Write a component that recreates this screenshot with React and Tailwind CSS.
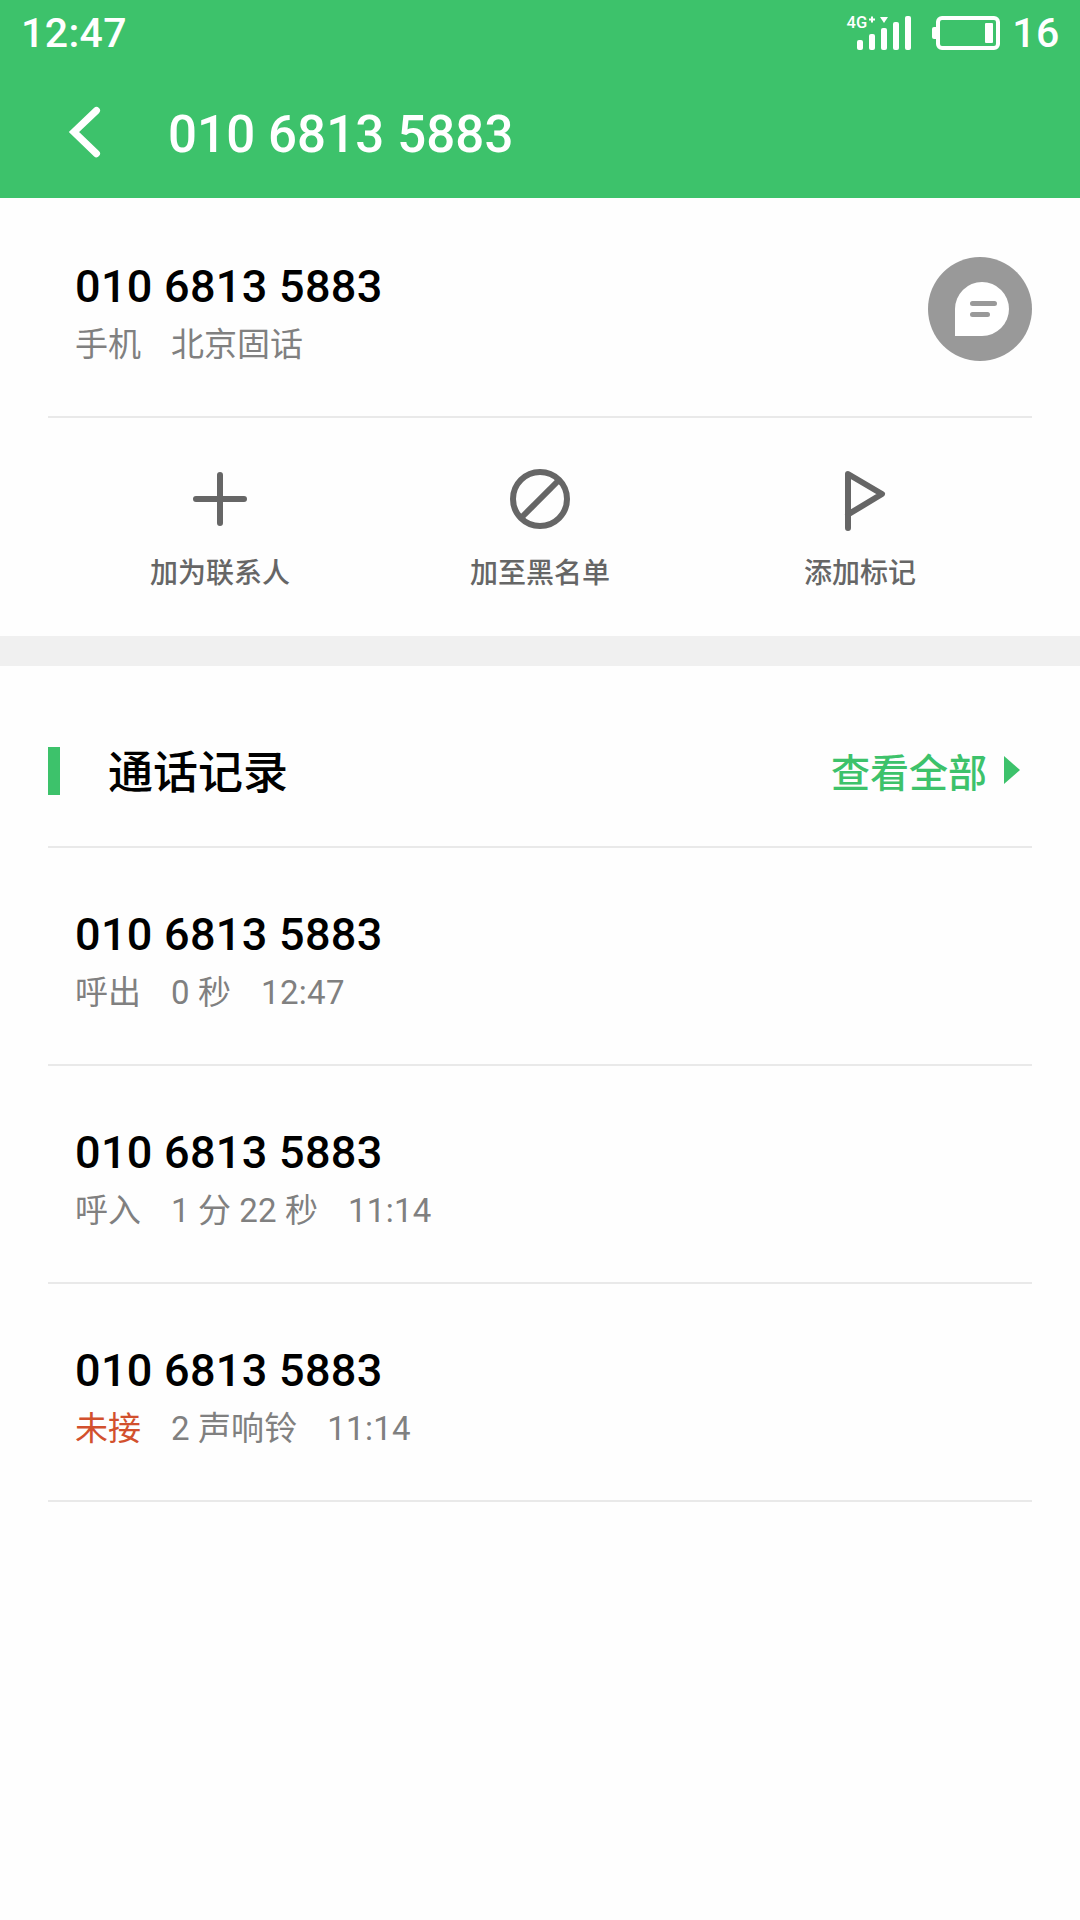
const NUMBER = '010 6813 5883';

const calls = [
  { id: 1, type: '呼出', detail: '0 秒', time: '12:47' },
  { id: 2, type: '呼入', detail: '1 分 22 秒', time: '11:14' },
  { id: 3, type: '未接', detail: '2 声响铃', time: '11:14', missed: true },
];

function SignalIcon() {
  return (
    <svg className="overflow-visible" width="66" height="36" viewBox="0 0 66 36" fill="currentColor">
      <text x="-0.5" y="12.500" fontSize="16.500" fontWeight="500">4G</text>
      <path d="M22 4.5h6M25 1.5v6" stroke="currentColor" strokeWidth="2" />
      <path d="M33 2h8l-4 6z" />
      <rect x="10" y="25" width="6" height="10" rx="2" />
      <rect x="22" y="19" width="6" height="16" rx="2" />
      <rect x="34" y="13" width="6" height="22" rx="2" />
      <rect x="46" y="7" width="6" height="28" rx="2" />
      <rect x="58" y="1" width="6" height="34" rx="2" />
    </svg>
  );
}

function BatteryIcon() {
  return (
    <svg width="68" height="36" viewBox="0 0 68 36" fill="currentColor">
      <rect x="6" y="3" width="60" height="30" rx="4" fill="none" stroke="currentColor" strokeWidth="4" />
      <path d="M4 12v12H2a2 2 0 0 1-2-2v-8a2 2 0 0 1 2-2z" />
      <rect x="53" y="8" width="8" height="20" rx="1" />
    </svg>
  );
}

function PlusIcon() {
  return (
    <svg width="60" height="60" viewBox="0 0 60 60" fill="none" stroke="currentColor" strokeWidth="6" strokeLinecap="round">
      <path d="M6 30h48M30 6v48" />
    </svg>
  );
}

function BlockIcon() {
  return (
    <svg width="60" height="60" viewBox="0 0 60 60" fill="none" stroke="currentColor" strokeWidth="6">
      <circle cx="30" cy="30" r="27" />
      <path d="M11 49L49 11" />
    </svg>
  );
}

function FlagIcon() {
  return (
    <svg className="overflow-visible" width="60" height="60" viewBox="0 0 60 60" fill="none" stroke="currentColor" strokeWidth="6" strokeLinecap="round" strokeLinejoin="round">
      <path d="M18 59V5l34 20-34 20.500" />
    </svg>
  );
}

const actions = [
  { label: '加为联系人', Icon: PlusIcon },
  { label: '加至黑名单', Icon: BlockIcon },
  { label: '添加标记', Icon: FlagIcon },
];

function Header() {
  return (
    <header className="h-[198px] bg-[#3dc26b] text-white font-medium">
      <div className="h-[66px] flex items-center justify-between pl-[21px] pr-[20px] text-[41px]">
        <span className="pt-[2px] tracking-[0.4px]">12:47</span>
        <div className="flex items-center">
          <SignalIcon />
          <span className="ml-[19px]">
            <BatteryIcon />
          </span>
          <span className="ml-[12px] pt-[2px] tracking-[0.6px]">16</span>
        </div>
      </div>
      <div className="h-[132px] flex items-center pl-[66px]">
        <button className="w-[102px]" aria-label="返回">
          <svg width="36" height="54" viewBox="0 0 36 54" fill="none" stroke="currentColor" strokeWidth="7.2" strokeLinecap="round">
            <path d="M30.400 5.600L8 27l22.400 21.600" />
          </svg>
        </button>
        <h1 className="pt-[6px] text-[51px] tracking-[0.1px]">{NUMBER}</h1>
      </div>
    </header>
  );
}

function ContactRow() {
  return (
    <div className="mx-12 h-[220px] flex items-center justify-between pt-[4px] pl-[27px] border-b-2 border-[#e9e9e9]">
      <div className="pt-[11px]">
        <p className="text-[45px] leading-[60px] font-medium tracking-[0.3px] text-black">{NUMBER}</p>
        <p className="mt-[1px] flex gap-[30px] text-[33px] leading-[54px] text-[#808080]">
          <span>手机</span>
          <span>北京固话</span>
        </p>
      </div>
      <button className="size-[104px] rounded-full bg-[#999999]" aria-label="发短信">
        <svg width="104" height="104" viewBox="0 0 104 104" fill="none">
          <path d="M27 79V52a27 27 0 1 1 27 27z" fill="#fff" />
          <path d="M44.500 46.500h22M44.500 57.500h15" stroke="#999" strokeWidth="5" strokeLinecap="round" />
        </svg>
      </button>
    </div>
  );
}

function CallRow({ call }) {
  return (
    <li className="h-[218px] flex flex-col justify-center pt-[12px] pl-[27px] border-b-2 border-[#e9e9e9]">
      <p className="text-[45px] leading-[60px] font-medium tracking-[0.3px] text-black">{NUMBER}</p>
      <p className="mt-[1px] flex gap-[30px] text-[33px] leading-[54px] text-[#808080]">
        <span className={call.missed ? 'text-[#d2502d]' : ''}>{call.type}</span>
        <span className="tracking-[0.1px]">{call.detail}</span>
        <span className="tracking-[0.3px]">{call.time}</span>
      </p>
    </li>
  );
}

export default function App() {
  return (
    <div className="min-h-[1920px] bg-[#fefefe] font-[Roboto,'Noto_Sans_CJK_SC',sans-serif]">
      <Header />
      <ContactRow />

      <div className="h-[218px] px-[60px] pt-[51px] grid grid-cols-3 text-[#666666]">
        {actions.map(({ label, Icon }) => (
          <button key={label} className="flex flex-col items-center self-start">
            <Icon />
            <span className="mt-[25px] text-[28px] leading-[40px] font-medium">{label}</span>
          </button>
        ))}
      </div>

      <div className="h-[30px] bg-[#f0f0f0]" />

      <section className="mx-12">
        <div className="h-[182px] flex items-center pt-[30px] border-b-2 border-[#e9e9e9]">
          <span className="w-3 h-12 bg-[#3dc26b]" />
          <h2 className="ml-12 pt-[6px] text-[45px] leading-[60px] font-medium text-black">通话记录</h2>
          <button className="ml-auto mr-3 flex items-center text-[#3dc26b]">
            <span className="pt-[6px] text-[39px] font-medium">查看全部</span>
            <svg className="-mt-[2px] ml-[17px]" width="16" height="28" viewBox="0 0 16 28" fill="currentColor">
              <path d="M0 0l16 14L0 28z" />
            </svg>
          </button>
        </div>
        <ul>
          {calls.map((call) => (
            <CallRow key={call.id} call={call} />
          ))}
        </ul>
      </section>
    </div>
  );
}
